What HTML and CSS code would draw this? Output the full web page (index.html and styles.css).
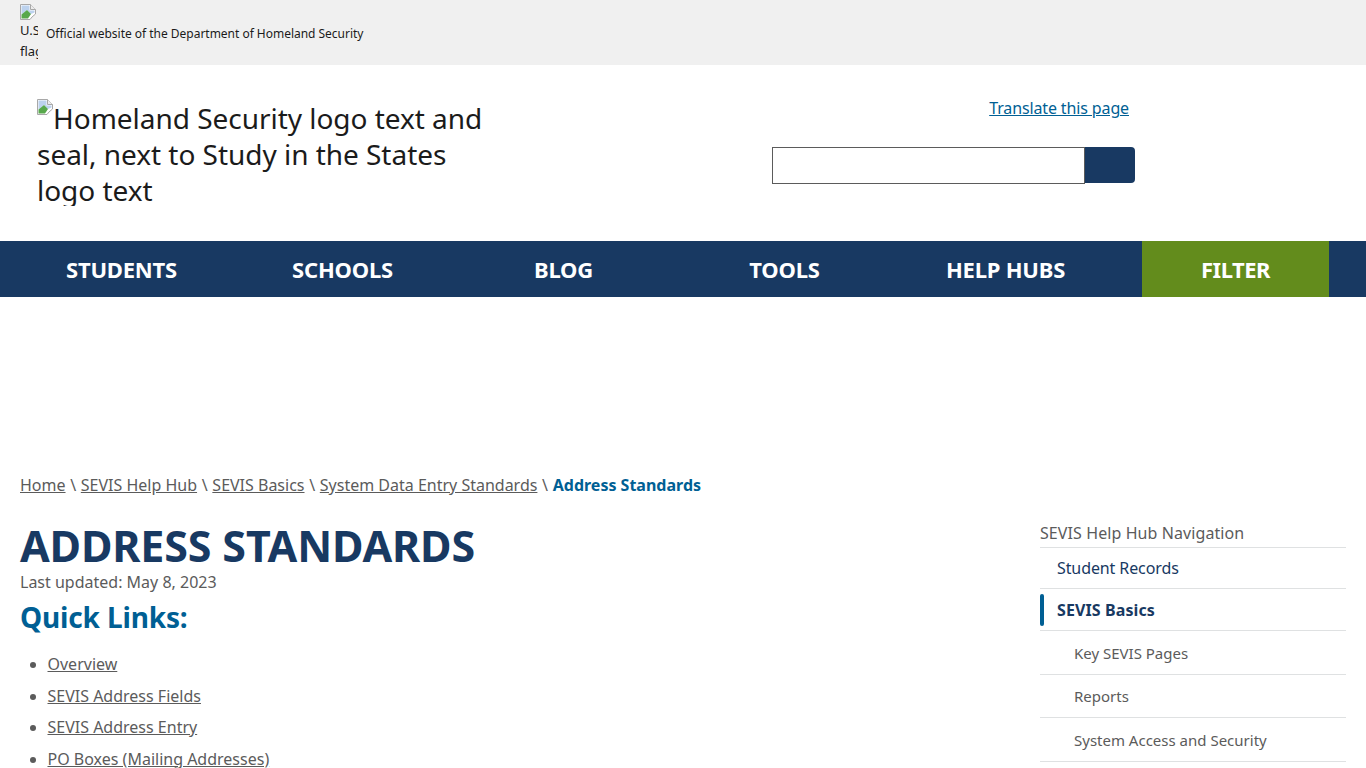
FILE: index.html
```html
<!DOCTYPE html>
<html lang="en">
<head>
<meta charset="utf-8">
<title>Address Standards</title>
<link rel="stylesheet" href="styles.css">
</head>
<body>
<div class="banner">
  <div class="flag">
    <svg class="broken" viewBox="0 0 16 16" width="16" height="16"><path d="M0.5 0.5H10.5L15.5 5.5V10L12 13 10 15.5H0.5Z" fill="#fff" stroke="#a8a8a8"/><path d="M10.5 0.5V5.5H15.5" fill="#ececec" stroke="#a8a8a8"/><path d="M1.5 1.5H9.5V6.5H14.5V8.5L11 10 7 6 1.5 10.5Z" fill="#bcd2ee"/><path d="M1.5 14.5V10.5L7 6 11 10 8 14.5Z" fill="#58a84c"/></svg>
    <span class="flag-alt">U.S. flag</span>
  </div>
  <span class="official">Official website of the Department of Homeland Security</span>
</div>
<header class="head">
  <div class="logo"><svg class="broken logo-icon" viewBox="0 0 16 16" width="16" height="16"><path d="M0.5 0.5H10.5L15.5 5.5V10L12 13 10 15.5H0.5Z" fill="#fff" stroke="#a8a8a8"/><path d="M10.5 0.5V5.5H15.5" fill="#ececec" stroke="#a8a8a8"/><path d="M1.5 1.5H9.5V6.5H14.5V8.5L11 10 7 6 1.5 10.5Z" fill="#bcd2ee"/><path d="M1.5 14.5V10.5L7 6 11 10 8 14.5Z" fill="#58a84c"/></svg>Homeland Security logo text and seal, next to Study in the States logo text</div>
  <div class="tools">
    <a class="translate" href="#">Translate this page</a>
    <div class="search"><input class="search-input" type="text" aria-label="Search"><button class="search-btn" aria-label="Search"></button></div>
  </div>
</header>
<nav class="nav">
  <a href="#">STUDENTS</a><a href="#">SCHOOLS</a><a href="#">BLOG</a><a href="#">TOOLS</a><a href="#">HELP HUBS</a><a class="filter" href="#">FILTER</a>
</nav>
<div class="crumbs"><a href="#">Home</a><span class="sep"> \ </span><a href="#">SEVIS Help Hub</a><span class="sep"> \ </span><a href="#">SEVIS Basics</a><span class="sep"> \ </span><a href="#">System Data Entry Standards</a><span class="sep"> \ </span><strong>Address Standards</strong></div>
<div class="content">
  <main class="main">
    <h1>ADDRESS STANDARDS</h1>
    <p class="updated">Last updated: May 8, 2023</p>
    <h2>Quick Links:</h2>
    <ul class="links">
      <li><a href="#">Overview</a></li>
      <li><a href="#">SEVIS Address Fields</a></li>
      <li><a href="#">SEVIS Address Entry</a></li>
      <li><a href="#">PO Boxes (Mailing Addresses)</a></li>
    </ul>
  </main>
  <aside class="side">
    <div class="side-title">SEVIS Help Hub Navigation</div>
    <a class="item top" href="#">Student Records</a>
    <a class="item top active" href="#">SEVIS Basics</a>
    <a class="item sub" href="#">Key SEVIS Pages</a>
    <a class="item sub" href="#">Reports</a>
    <a class="item sub" href="#">System Access and Security</a>
  </aside>
</div>
</body>
</html>
```
FILE: styles.css
```css
html, body { margin: 0; padding: 0; height: 768px; overflow: hidden; }
body { font-family: "Noto Sans", "Open Sans", sans-serif; color: #5b5b5b; background: #fff; font-size: 16px; }
a { color: inherit; }

.banner { height: 65px; background: #f0f0f0; display: flex; align-items: center; padding-left: 20px; color: #1b1b1b; }
.flag { width: 18px; height: 55px; margin-top: -2px; overflow: hidden; font-size: 13px; line-height: 21px; flex: none; }
.broken { display: inline-block; vertical-align: top; }
.flag .broken { display: block; }
.flag-alt { display: block; }
.official { font-size: 12px; margin: 2px 0 0 8px; letter-spacing: -0.02px; }

.head { height: 176px; display: flex; }
.logo { width: 455px; height: 107px; box-sizing: border-box; padding-top: 1px; margin: 34px 0 0 37px; overflow: hidden; font-size: 28px; line-height: 36px; color: #1b1b1b; letter-spacing: -0.03px; }
.logo-icon { margin-top: -1px; }
.tools { margin-left: 280px; width: 363px; display: flex; flex-direction: column; }
.translate { font-size: 16px; color: #005f94; align-self: flex-end; margin: 31px 6px 0 0; line-height: 24px; letter-spacing: -0.13px; }
.search { display: flex; margin-top: 27px; height: 37px; }
.search-input { width: 313px; height: 37px; box-sizing: border-box; border: 1px solid #5b5b5b; padding: 0; margin: 0; background: #fff; outline: 0; flex: none; }
.search-btn { width: 50px; height: 36px; border: 0; padding: 0; background: #183962; border-radius: 0 4px 4px 0; flex: none; }

.nav { height: 56px; background: #183962; display: flex; padding-left: 11px; }
.nav a { width: 221px; flex: none; color: #fff; font-weight: 700; font-size: 22px; line-height: 56px; text-align: center; text-decoration: none; letter-spacing: -0.2px; }
.nav .filter { width: 187px; background: #638c1c; margin-left: 26px; letter-spacing: -0.5px; }

.crumbs { margin: 176px 0 0 20px; font-size: 16px; line-height: 24px; height: 24px; white-space: nowrap; }
.sep { margin: 0 0.5px; }
.crumbs strong { color: #005f94; }

.content { display: flex; padding: 0 20px; margin-top: 23px; }
.main { width: 1020px; flex: none; }
h1 { margin: 0; font-size: 43px; line-height: 51px; font-weight: 700; color: #183962; letter-spacing: -0.15px; }
.updated { margin: 0; font-size: 16px; line-height: 22px; }
h2 { margin: 5px 0 0; font-size: 28px; line-height: 38px; font-weight: 700; color: #005f94; letter-spacing: -0.15px; }
.links { margin: 16px 0 0; padding-left: 27.5px; font-size: 16px; line-height: 24px; }
.links li { margin-bottom: 7.5px; }

.side { width: 306px; flex: none; margin-top: 1px; }
.side-title { font-size: 16px; line-height: 24px; padding-bottom: 2px; border-bottom: 1px solid #dfe1e2; letter-spacing: 0.09px; }
.item { display: block; border-bottom: 1px solid #dfe1e2; text-decoration: none; position: relative; }
.top { font-size: 16px; line-height: 24px; padding: 8px 17px; color: #183962; letter-spacing: -0.1px; }
.active { font-weight: 700; padding-top: 9px; padding-bottom: 8px; letter-spacing: 0.1px; }
.active::before { content: ""; position: absolute; left: 0; top: 5px; bottom: 4px; width: 4px; background: #005f94; border-radius: 2px; }
.sub { font-size: 15px; line-height: 22px; padding: 10.75px 34px 9.75px; }
```
